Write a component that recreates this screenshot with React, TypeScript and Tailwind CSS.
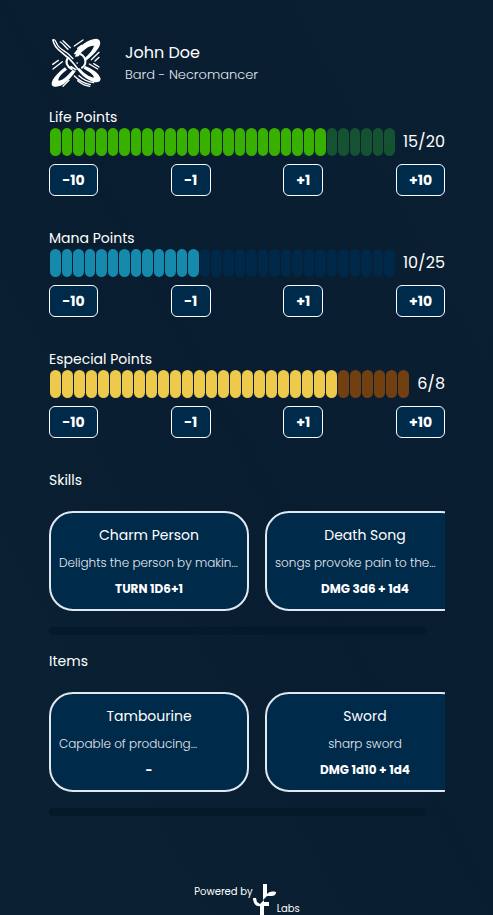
type Points = {
  label: string;
  value: string;
  filled: number;
  on: string;
  off: string;
  valueWidth: string;
};

type Entry = { name: string; text: string; roll: string; long?: boolean };

const SEGMENTS = 30;
const STEPS = ["-10", "-1", "+1", "+10"];

const points: Points[] = [
  { label: "Life Points", value: "15/20", filled: 24, on: "bg-[#38b000]", off: "bg-[#155232]", valueWidth: "w-[50px]" },
  { label: "Mana Points", value: "10/25", filled: 13, on: "bg-[#168aad]", off: "bg-[#002848]", valueWidth: "w-[50px]" },
  { label: "Especial Points", value: "6/8", filled: 24, on: "bg-[#edc94c]", off: "bg-[#724010]", valueWidth: "w-9" },
];

const skills: Entry[] = [
  { name: "Charm Person", text: "Delights the person by makin…", roll: "TURN 1D6+1", long: true },
  { name: "Death Song", text: "songs provoke pain to the…", roll: "DMG 3d6 + 1d4", long: true },
];

const items: Entry[] = [
  { name: "Tambourine", text: "Capable of producing…", roll: "-", long: true },
  { name: "Sword", text: "sharp sword", roll: "DMG 1d10 + 1d4" },
];

function Emblem() {
  return (
    <svg viewBox="0 0 162 162" className="size-[54px]" fill="none" stroke="white" strokeWidth="4" strokeLinecap="round" aria-hidden="true">
      <g fill="white" stroke="none">
        <path d="M74 54C90 31 116 10 142 8C158 10 155 26 148 37C139 51 124 64 111 74L105 68C118 57 132 41 135 29C120 28 104 41 90 57Z" />
        <path d="M48 94C30 108 7 128 8 146C12 156 30 153 44 144C58 134 70 121 80 106L71 101C60 115 44 132 29 134C25 126 38 113 54 101Z" />
        <path d="M108 90C128 97 152 112 155 129C153 141 139 141 124 134C108 126 93 113 83 98L92 97C104 112 121 123 134 125C136 117 120 106 104 98Z" />
      </g>
      <path strokeWidth="5" d="M12 12C14 28 24 39 38 49L58 66" />
      <path d="M13 11C22 10 20 22 29 32C36 40 48 46 58 54L72 68" />
      <path strokeWidth="6" d="M84 55C96 51 107 60 109 74C110 84 106 91 99 95" />
      <path strokeWidth="6" d="M56 67C48 78 54 92 68 99" />
      <path strokeWidth="5" d="M58 65L75 84L86 98" />
      <path strokeWidth="5" d="M80 60L88 58M66 92L80 101" />
      <path d="M84 81L85 81" />
      <path d="M34 18C42 22 48 32 57 40M42 14L64 35" />
      <path d="M76 30L102 12M86 37L98 28" />
      <path d="M127 71L150 49M138 75L150 64" />
      <path d="M11 85L28 73M12 99L40 77" />
      <path d="M121 84L146 99M134 83L150 93" />
      <path d="M42 151L60 133M76 120C90 134 106 142 124 146M86 134C97 143 108 149 122 151M90 119C103 131 118 138 134 140" />
    </svg>
  );
}

function LabsMark() {
  return (
    <svg viewBox="0 0 24 32" className="h-8 w-6" fill="white" aria-hidden="true">
      <path d="M10 0h4v10c2-2 4-3 9-2c0 3-2 4-5 4h-4l-4 4z" />
      <path d="M0 14h3l1 4l3 2v2c-4 1-7-3-7-8z" />
      <path d="M7 20l4-4v2h5v4h-5v10H7z" />
    </svg>
  );
}

function PointsBlock({ label, value, filled, on, off, valueWidth }: Points) {
  return (
    <section>
      <h2 className="text-sm leading-5">{label}</h2>
      <div className="mt-px flex items-center">
        <div className="flex h-7 min-w-0 flex-1 gap-px pl-px" role="img" aria-label={`${label}: ${value}`}>
          {Array.from({ length: SEGMENTS }, (_, i) => (
            <span key={i} className={`flex-1 rounded-full ${i < filled ? on : off}`} />
          ))}
        </div>
        <span className={`${valueWidth} text-right text-base`}>{value}</span>
      </div>
      <div className="mt-2 flex justify-between">
        {STEPS.map((step) => (
          <button
            key={step}
            type="button"
            className={`${step.length > 2 ? "w-[49px]" : "w-10"} h-8 rounded-md border border-white bg-[#002a4a] text-sm font-bold`}
          >
            {step}
          </button>
        ))}
      </div>
    </section>
  );
}

function Shelf({ title, entries }: { title: string; entries: Entry[] }) {
  return (
    <section>
      <h2 className="text-sm leading-6">{title}</h2>
      <div className="mt-[19px] flex gap-4 overflow-hidden">
        {entries.map((e) => (
          <article
            key={e.name}
            className="flex h-[100px] w-[200px] shrink-0 flex-col items-center gap-1.5 rounded-3xl border-2 border-[#e2e8f0] bg-[#002a4a] px-2 pt-2.5"
          >
            <h3 className="text-sm leading-6">{e.name}</h3>
            <p className={`${e.long ? "w-full" : ""} whitespace-nowrap text-xs leading-5 font-light text-[#e2e8f0]`}>{e.text}</p>
            <strong className="text-xs leading-5 font-bold">{e.roll}</strong>
          </article>
        ))}
      </div>
      <div className="mt-4 mr-[19px] h-2 rounded-full bg-[#051a28]" />
    </section>
  );
}

export default function App() {
  return (
    <main className="min-h-screen bg-linear-to-tr from-[#0a2134] via-[#091d30] to-[#091f32] pt-9 pr-12 pl-[49px] font-['Poppins','Inter',sans-serif] text-white">
      <header className="flex items-center gap-[22px]">
        <Emblem />
        <div>
          <h1 className="text-base leading-6">John Doe</h1>
          <p className="text-[13px] leading-5 font-light text-[#e2e8f0]">Bard - Necromancer</p>
        </div>
      </header>
      <div className="mt-[17px] flex flex-col gap-8">
        {points.map((p) => (
          <PointsBlock key={p.label} {...p} />
        ))}
      </div>
      <div className="mt-[30px] flex flex-col gap-3.5">
        <Shelf title="Skills" entries={skills} />
        <Shelf title="Items" entries={items} />
      </div>
      <footer className="mt-[68px] flex justify-center text-[10px] leading-4">
        <span>Powered by</span>
        <LabsMark />
        <span className="mt-[17px]">Labs</span>
      </footer>
    </main>
  );
}
